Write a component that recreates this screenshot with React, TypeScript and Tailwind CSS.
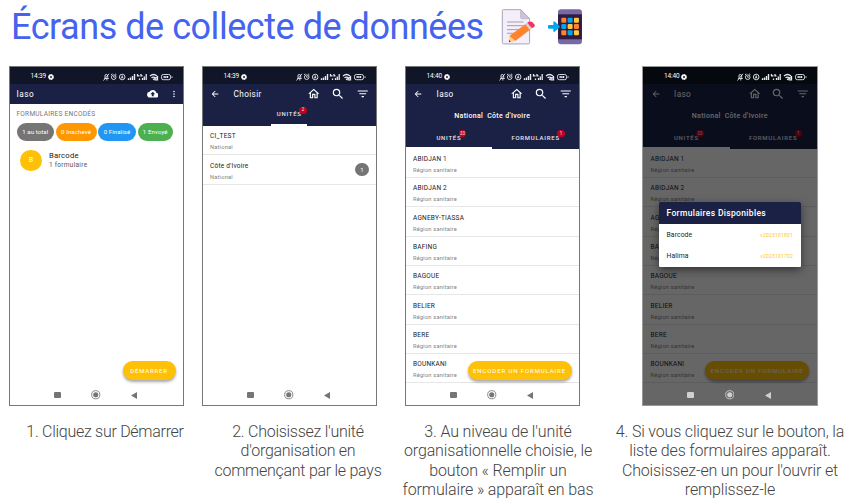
import type { ReactNode } from "react";
import {
  MdArrowBack,
  MdCloudUpload,
  MdFilterList,
  MdMoreVert,
  MdOutlineHome,
  MdSearch,
} from "react-icons/md";

const REGIONS = [
  "ABIDJAN 1",
  "ABIDJAN 2",
  "AGNEBY-TIASSA",
  "BAFING",
  "BAGOUE",
  "BELIER",
  "BERE",
  "BOUNKANI",
];

function MemoIcon() {
  return (
    <svg viewBox="600 20 110 116" className="h-[38.6px] w-[36.6px]">
      <path d="M610 28h53l26 27v72q0 4-4 4h-75q-3 0-3-4V31q0-3 3-3z" fill="#f3eef8" stroke="#aba3bb" strokeWidth="3" />
      <path d="M662 28v24q0 3 3 3h24z" fill="#cdc4d8" stroke="#b4abc3" strokeWidth="2" />
      <path d="M621 65h50M621 76h50M621 88h41M621 99h28" stroke="#998ea4" strokeWidth="2.6" />
      <path d="M628 107l52-38 13 17-47 36z" fill="#ff822d" />
      <path d="M628 107l18 15-19 3z" fill="#ffce7c" />
      <path d="M627 119l5 5-5 2z" fill="#402a32" />
      <path d="M676 72l6-5 14 17-6 5z" fill="#d3d3d3" />
      <path d="M682 67q8-6 15-2l6 7q5 7-7 12z" fill="#f92f60" />
    </svg>
  );
}

function PhoneArrowIcon() {
  return (
    <svg viewBox="740 20 110 116" className="h-[38.6px] w-[36.6px]">
      <rect x="773" y="27" width="72" height="105" rx="9" fill="#7769a5" />
      <path d="M773 42h72v75h-72z" fill="#321b41" />
      <g>
        <rect x="783" y="52" width="15" height="15" rx="3" fill="#ff822d" />
        <rect x="802" y="52" width="15" height="15" rx="3" fill="#00a6ed" />
        <rect x="821" y="52" width="15" height="15" rx="3" fill="#ffc83d" />
        <rect x="783" y="71" width="15" height="15" rx="3" fill="#00a6ed" />
        <rect x="802" y="71" width="15" height="15" rx="3" fill="#ffc83d" />
        <rect x="821" y="71" width="15" height="15" rx="3" fill="#ff822d" />
        <rect x="783" y="90" width="15" height="15" rx="3" fill="#ff822d" />
        <rect x="802" y="90" width="15" height="15" rx="3" fill="#00a6ed" />
        <rect x="821" y="90" width="15" height="15" rx="3" fill="#ffc83d" />
      </g>
      <path d="M746 74h13v-8q1-5 5-2l13 12q3 3 0 6l-13 12q-4 3-5-2v-7h-13q-3 0-3-3v-5q0-3 3-3z" fill="#00a6ed" />
    </svg>
  );
}

function StatusIcons() {
  return (
    <svg viewBox="0 0 70 8" className="h-[8px] w-[70px]" fill="none" stroke="#e8eaf0" strokeWidth="0.9">
      <path d="M1.500 5.500h4l-.8-1V3q0-1.500-1.500-1.500T2 3v1.500zM.5 7.500L6 .8M3 6.800h1.500" />
      <circle cx="10.700" cy="4.200" r="2.300" />
      <path d="M10.700 3v1.300h1M8 1.800L9.300.8M12.100.8l1.300 1" />
      <circle cx="19.200" cy="4" r="2.800" />
      <path d="M19.200 2.200l1.100 3.200-1.100-.6-1.100.6z" fill="#e8eaf0" strokeWidth="0.300" />
      <path d="M25.500 7V5.300M27.500 7V4.500M29.500 7V3M31.500 7V1" strokeWidth="1.400" />
      <path d="M34.500 1v1.800h2M38 1v1.800h1.500M36.500 7V5.500M39.500 7V5M41.300 7V3.500M43.200 7V1" strokeWidth="1.300" />
      <path d="M47 3q3.500-3 7 0M48.500 4.800q2-1.500 4 0M50 6.600L54 4.500M51.500 6.800h3V3" strokeWidth="1.300" />
      <rect x="58.500" y="1.500" width="9" height="5.200" rx="1.800" />
      <path d="M60.500 4.100h4.800" strokeWidth="2" strokeDasharray="1.300 .4" />
      <path d="M69 3.300v1.600" />
    </svg>
  );
}

function StatusBar({ time }: { time: string }) {
  return (
    <div className="flex h-[17px] shrink-0 items-center pt-[2px] pr-[10px] pl-[21px] text-white">
      <span className="text-[6.500px] leading-none tracking-[-0.15px]">{time}</span>
      <svg viewBox="0 0 6 6" className="ml-[2px] size-[6px]">
        <circle cx="3" cy="3" r="2.100" fill="none" stroke="white" strokeWidth="1.600" strokeDasharray="1.500 .2" />
        <circle cx="3" cy="3" r="1.500" fill="none" stroke="white" strokeWidth="1.100" />
      </svg>
      <div className="ml-auto">
        <StatusIcons />
      </div>
    </div>
  );
}

function NavBar({ color }: { color: string }) {
  return (
    <div className={`flex h-[21px] shrink-0 items-center pt-[1px] pl-[44px] ${color}`}>
      <div className="h-[6px] w-[7px] rounded-[1px] bg-current" />
      <svg viewBox="0 0 10 10" className="ml-[30.500px] size-[9.500px]">
        <circle cx="5" cy="5" r="4.300" fill="none" stroke="currentColor" strokeWidth="0.900" />
        <circle cx="5" cy="5" r="2.700" fill="currentColor" />
      </svg>
      <svg viewBox="0 0 6 7" className="ml-[30.500px] h-[7px] w-[6px]">
        <path d="M0 3.500L6 0v7z" fill="currentColor" />
      </svg>
    </div>
  );
}

function AppBar({ title }: { title: string }) {
  return (
    <div className="flex h-[20px] shrink-0 items-center pl-[7.500px] text-white">
      <MdArrowBack className="size-[10px]" />
      <span className="ml-[13.500px] w-[73.500px] text-[8.200px] leading-none tracking-[0.4px]">{title}</span>
      <MdOutlineHome className="size-[13.500px]" />
      <MdSearch className="ml-[10px] size-[14px]" />
      <MdFilterList className="ml-[11px] size-[13.500px]" />
    </div>
  );
}

function Tab({ label, count, active }: { label: string; count: string; active?: boolean }) {
  return (
    <div
      className={`flex h-full items-center justify-center border-b-2 pt-[1px] ${active ? "border-white" : "border-transparent"}`}
    >
      <span className="relative text-[6px] leading-none font-medium tracking-[0.75px] text-[#e4e6ee]">
        {label}
        <span className="absolute -top-[4.500px] -right-[5px] flex h-[7px] w-[7.500px] items-center justify-center rounded-full bg-[#c4001f] text-[4.500px] font-normal tracking-normal">
          {count}
        </span>
      </span>
    </div>
  );
}

function Row({ title, subtitle, tall, children }: { title: string; subtitle: string; tall?: boolean; children?: ReactNode }) {
  return (
    <div
      className={`flex shrink-0 items-center border-b border-[#e6e6e6] pl-[7.500px] ${tall ? "h-[29.700px]" : "h-[29.350px]"}`}
    >
      <div className="flex flex-col gap-[4px] pt-[3.500px]">
        <span className="text-[6.500px] leading-[7px] tracking-[0.22px] text-[#1c1c1c]">{title}</span>
        <span className="text-[5.700px] leading-[6px] tracking-[0.2px] text-[#828282]">{subtitle}</span>
      </div>
      {children}
    </div>
  );
}

function Phone({ time, navColor, children, overlay }: { time: string; navColor: string; children: ReactNode; overlay?: ReactNode }) {
  return (
    <div
      className={`relative flex h-[340px] w-[175.500px] flex-col overflow-hidden border font-['Roboto',sans-serif] ${overlay ? "border-[#999]" : "border-[#777]"}`}
    >
      <div className={`relative z-20 shrink-0 ${overlay ? "bg-[#05080d]" : "bg-[#101527]"}`}>
        <StatusBar time={time} />
      </div>
      <div className="flex min-h-0 flex-1 flex-col bg-white">{children}</div>
      <div className="relative z-20">
        <NavBar color={navColor} />
      </div>
      {overlay}
    </div>
  );
}

function ActionButton({ children, size }: { children: ReactNode; size: string }) {
  return (
    <div
      className={`absolute top-[294px] flex h-[19px] items-center justify-center rounded-full bg-[#ffc107] text-[6px] text-white shadow-[0_2px_3px_rgba(0,0,0,0.35)] ${size}`}
    >
      {children}
    </div>
  );
}

function UnitScreen({ overlay }: { overlay?: ReactNode }) {
  return (
    <Phone time="14:40" navColor={overlay ? "text-[#d0d0d0]" : "text-[#757575]"} overlay={overlay}>
      <div className="flex h-[64.500px] shrink-0 flex-col bg-[#1b2144]">
        <AppBar title="Iaso" />
        <div className="flex h-[24px] items-center justify-center gap-[4px] text-[7px] leading-none font-medium tracking-[0.33px] text-white">
          <span>National</span>
          <span>Côte d'Ivoire</span>
        </div>
        <div className="grid flex-1 grid-cols-2">
          <Tab label="UNITÉS" count="33" active />
          <Tab label="FORMULAIRES" count="1" />
        </div>
      </div>
      {REGIONS.map((name) => (
        <Row key={name} title={name} subtitle="Région sanitaire" />
      ))}
      <ActionButton size="left-[62px] w-[104px] tracking-[0.9px]">ENCODER UN FORMULAIRE</ActionButton>
    </Phone>
  );
}

function FormsDialog() {
  return (
    <div className="absolute inset-0 z-10 bg-black/60">
      <div className="absolute top-[135px] left-[16px] h-[64.500px] w-[141.500px] overflow-hidden rounded-[1px] bg-white shadow-[0_3px_8px_rgba(0,0,0,0.5)]">
        <div className="flex h-[22px] items-center bg-[#1b2144] pl-[7.500px] text-[8.500px] leading-none font-medium tracking-[0.33px] text-white">
          Formulaires Disponibles
        </div>
        <DialogRow name="Barcode" version="v2023101801" />
        <DialogRow name="Halima" version="v2023101702" />
      </div>
    </div>
  );
}

function DialogRow({ name, version }: { name: string; version: string }) {
  return (
    <div className="flex h-[21.300px] items-center justify-between pt-[1px] pr-[7.500px] pl-[7.500px] leading-none">
      <span className="text-[6.800px] tracking-[0.1px] text-[#222]">{name}</span>
      <span className="text-[5px] tracking-[0.2px] text-[#ffc910]">{version}</span>
    </div>
  );
}

function Chip({ label, style }: { label: string; style: string }) {
  return (
    <span className={`flex h-[18px] items-center justify-center rounded-full text-[6px] leading-none tracking-[0.12px] text-white ${style}`}>
      {label}
    </span>
  );
}

function HomeScreen() {
  return (
    <Phone time="14:39" navColor="text-[#757575]">
      <div className="flex h-[20px] shrink-0 items-center bg-[#1b2144] pr-[4.500px] pl-[7px] text-white">
        <span className="text-[8.200px] leading-none tracking-[0.5px]">Iaso</span>
        <MdCloudUpload className="ml-auto size-[11.500px]" />
        <MdMoreVert className="ml-[10.500px] size-[10px]" />
      </div>
      <div className="mt-[6px] ml-[7px] text-[6.500px] leading-[8px] tracking-[0.28px] text-[#777]">
        FORMULAIRES ENCODÉS
      </div>
      <div className="mt-[5px] ml-[7px] flex gap-[1.500px]">
        <Chip label="1 au total" style="w-[37.500px] bg-[#757575]" />
        <Chip label="0 Inachevé" style="w-[41px] bg-[#ff9800]" />
        <Chip label="0 Finalisé" style="w-[38px] bg-[#2196f3]" />
        <Chip label="1 Envoyé" style="w-[35.500px] bg-[#4caf50]" />
      </div>
      <div className="mt-[9px] ml-[10.500px] flex items-center gap-[7px]">
        <span className="flex h-[21px] w-[22px] items-center justify-center rounded-full bg-[#ffc107] text-[6.500px] text-white">
          B
        </span>
        <div className="flex flex-col gap-[1px]">
          <span className="text-[7.700px] leading-[9px] tracking-[0.2px] text-[#222]">Barcode</span>
          <span className="text-[6.500px] leading-[9px] tracking-[0.28px] text-[#555]">1 formulaire</span>
        </div>
      </div>
      <ActionButton size="left-[113px] w-[53px] tracking-[0.8px]">DÉMARRER</ActionButton>
    </Phone>
  );
}

function ChooseScreen() {
  return (
    <Phone time="14:39" navColor="text-[#757575]">
      <div className="flex h-[41.500px] shrink-0 flex-col items-center bg-[#1b2144]">
        <div className="w-full">
          <AppBar title="Choisir" />
        </div>
        <div className="w-[36px] flex-1">
          <Tab label="UNITÉS" count="2" active />
        </div>
      </div>
      <Row title="CI_TEST" subtitle="National" tall />
      <Row title="Côte d'Ivoire" subtitle="National" tall>
        <span className="mr-[7px] ml-auto flex h-[13px] w-[14px] items-center justify-center rounded-full bg-[#757575] text-[6px] text-white">
          1
        </span>
      </Row>
    </Phone>
  );
}

export default function App() {
  return (
    <div className="h-[499px] w-[856px] overflow-hidden bg-white font-['Roboto',sans-serif]">
      <header className="flex h-[66px] items-start pl-[11px]">
        <h1 className="w-[489px] text-[36px] leading-[54px] tracking-[-0.46px] whitespace-nowrap text-[#4563ee]">
          Écrans de collecte de données
        </h1>
        <div className="mt-[6.700px] flex gap-[10px]">
          <MemoIcon />
          <PhoneArrowIcon />
        </div>
      </header>
      <div className="flex pl-[8.500px]">
        <HomeScreen />
        <div className="w-[17.500px]" />
        <ChooseScreen />
        <div className="w-[27.500px]" />
        <UnitScreen />
        <div className="w-[62px]" />
        <UnitScreen overlay={<FormsDialog />} />
      </div>
      <div className="flex pt-[16px] text-center text-[16px] leading-[19.300px] font-light whitespace-nowrap text-[#444]">
        <p className="ml-[25px] w-[160px] tracking-[-0.28px]">1. Cliquez sur Démarrer</p>
        <p className="ml-[23px] w-[180px] tracking-[-0.27px]">
          2. Choisissez l'unité
          <br />
          d'organisation en
          <br />
          commençant par le pays
        </p>
        <p className="ml-[10px] w-[200px] tracking-[-0.14px]">
          3. Au niveau de l'unité
          <br />
          organisationnelle choisie, le
          <br />
          bouton « Remplir un
          <br />
          formulaire » apparaît en bas
        </p>
        <p className="ml-[12px] w-[240px] tracking-[-0.17px]">
          4. Si vous cliquez sur le bouton, la
          <br />
          liste des formulaires apparaît.
          <br />
          Choisissez-en un pour l'ouvrir et
          <br />
          remplissez-le
        </p>
      </div>
    </div>
  );
}
